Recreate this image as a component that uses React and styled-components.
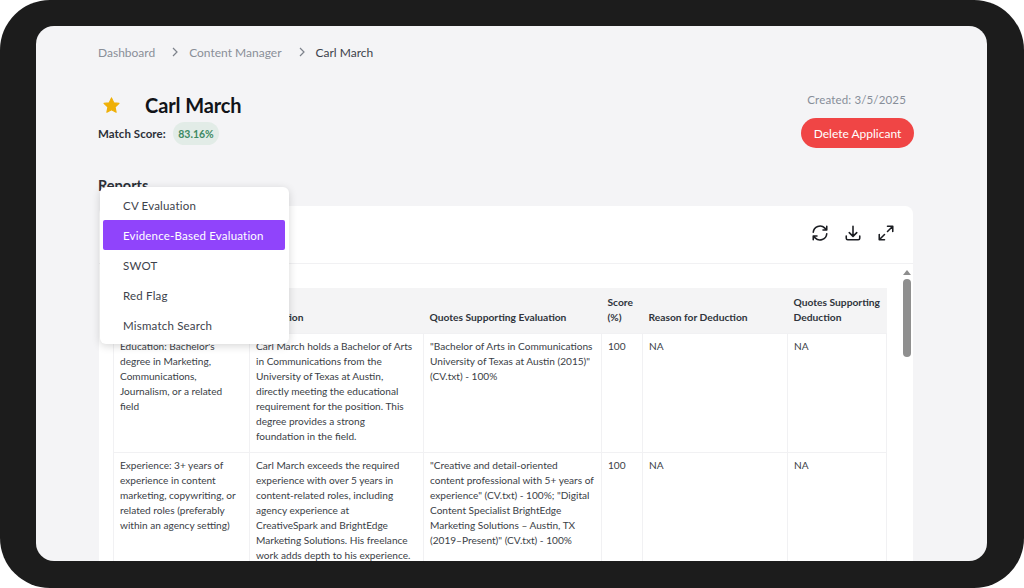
import React from "react";
import styled, { createGlobalStyle } from "styled-components";

const Global = createGlobalStyle`
  html, body { margin: 0; padding: 0; background: #fff; }
  body { font-family: "Lato", "Inter", "Liberation Sans", sans-serif; }
`;
const Frame = styled.div`
  width: 1024px; height: 588px; box-sizing: border-box; overflow: hidden;
  background: #1c1c1c; border-radius: 50px;
  padding: 26px 37px 27px 36px; display: flex;
`;
const Screen = styled.main`
  position: relative; flex: 1; min-width: 0; overflow: hidden;
  background: #f4f4f6; border-radius: 18px;
  padding: 18px 73px 0 62px;
  display: flex; flex-direction: column;
`;
const Crumbs = styled.nav`
  display: flex; align-items: center; height: 16px; font-size: 12px;
  color: #8a8f98;
`;
const Crumb = styled.span`
  color: ${p => (p.$current ? "#3d424b" : "#8a8f98")};
`;
const Chevron = styled.svg`
  width: 8px; height: 10px; margin: 0 10px 0 16px; fill: none; stroke: #7d828b; stroke-width: 1.2;
`;
const Head = styled.header`
  display: flex; justify-content: space-between; margin-top: 30px; height: 67px;
`;
const HeadLeft = styled.div`display: flex; flex-direction: column;`;
const TitleRow = styled.div`display: flex; align-items: center; height: 29px;`;
const Star = styled.svg`
  width: 19px; height: 18px; margin: 0 24px 0 4px; fill: #efb008; stroke: #efb008; stroke-width: 1.500; stroke-linejoin: round;
`;
const Title = styled.h1`margin: 0; font-size: 20px; font-weight: 700; color: #111318; letter-spacing: -.1px;`;
const ScoreRow = styled.div`display: flex; align-items: center; gap: 7px; margin-top: 3px;`;
const ScoreLabel = styled.span`font-size: 11.5px; font-weight: 700; color: #2c3038; letter-spacing: .05px;`;
const Badge = styled.span`
  display: flex; align-items: center; padding: 0 5.500px; height: 23px; border-radius: 12px;
  background: #e2ece7; color: #3d8a63; font-size: 10.5px; font-weight: 700;
`;
const HeadRight = styled.div`display: flex; flex-direction: column; align-items: flex-end;`;
const Created = styled.div`
  font-size: 11.5px; color: #878e99; margin: 2px 8px 0 0; line-height: 16px; letter-spacing: .15px;
`;
const Delete = styled.button`
  margin-top: 10px; width: 113px; height: 30px; border: 0; border-radius: 15px;
  background: #f04545; color: #fff; font: inherit; font-size: 12px;
`;
const Section = styled.h2`
  margin: 20px 0 0 0; font-size: 14.5px; font-weight: 700; color: #2c3038; line-height: 18px;
`;
const Card = styled.section`
  margin: 11px 1px 0 1px; flex: 1; min-height: 0; background: #fff; border-radius: 8px 8px 0 0;
  display: flex; flex-direction: column; overflow: hidden;
`;
const CardBar = styled.div`
  height: 58px; flex: none; box-sizing: border-box; border-bottom: 1px solid #f1f1f3;
  display: flex; align-items: center; justify-content: flex-end; gap: 15px; padding: 0 18px 3px 0;
`;
const IconButton = styled.svg`
  width: 18px; height: 18px; fill: none; stroke: #1b1d22; stroke-width: 2.100;
  stroke-linecap: round; stroke-linejoin: round;
`;
const ScrollArea = styled.div`
  flex: 1; min-height: 0; display: flex; padding: 0 0 0 14px;
`;
const TableWrap = styled.div`flex: 1; min-width: 0; padding-top: 24px;`;
const Table = styled.table`
  width: 773px; table-layout: fixed; border-collapse: collapse; font-size: 10.100px; line-height: 15px;
`;
const Th = styled.th`
  background: #f4f4f5; color: #30343c; font-weight: 700; font-size: 10.250px; text-align: left; vertical-align: bottom;
  padding: 7px 6px 8px; white-space: pre; width: ${p => p.$w}px; box-sizing: border-box;
`;
const Td = styled.td`
  border: 1px solid #f1f1f3; color: #3a3e46; padding: 5px 6px 8px; vertical-align: top;
  white-space: pre;
`;
const Track = styled.div`
  width: 12px; flex: none; display: flex; flex-direction: column; align-items: center; padding-top: 6px;
`;
const Arrow = styled.div`
  width: 0; height: 0; border-left: 4px solid transparent; border-right: 4px solid transparent;
  border-bottom: 5px solid #8d8d8d;
`;
const Thumb = styled.div`
  width: 8px; height: 78px; margin-top: 4px; border-radius: 4px; background: #8f8f8f;
`;
const Menu = styled.ul`
  position: absolute; left: 64px; top: 161px; width: 182px; margin: 0; padding: 3px 4px 4px 3px;
  list-style: none; background: #fff; border-radius: 6px;
  box-shadow: 0 2px 8px rgba(0,0,0,.16);
`;
const MenuItem = styled.li`
  height: 30px; display: flex; align-items: center; padding-left: 20px; border-radius: 2px;
  font-size: 11.5px; letter-spacing: .2px;
  color: ${p => (p.$active ? "#fff" : "#3d424b")};
  background: ${p => (p.$active ? "#9044fb" : "transparent")};
`;

const columns = [
  ["Criteria", 136], ["Evaluation", 174], ["Quotes Supporting Evaluation", 178],
  ["Score\n(%)", 41], ["Reason for Deduction", 145], ["Quotes Supporting\nDeduction", 99],
];
const rows = [
  [
    "Education: Bachelor's\ndegree in Marketing,\nCommunications,\nJournalism, or a related\nfield",
    "Carl March holds a Bachelor of Arts\nin Communications from the\nUniversity of Texas at Austin,\ndirectly meeting the educational\nrequirement for the position. This\ndegree provides a strong\nfoundation in the field.",
    "\"Bachelor of Arts in Communications\nUniversity of Texas at Austin (2015)\"\n(CV.txt) - 100%",
    "100", "NA", "NA",
  ],
  [
    "Experience: 3+ years of\nexperience in content\nmarketing, copywriting, or\nrelated roles (preferably\nwithin an agency setting)",
    "Carl March exceeds the required\nexperience with over 5 years in\ncontent-related roles, including\nagency experience at\nCreativeSpark and BrightEdge\nMarketing Solutions. His freelance\nwork adds depth to his experience.",
    "\"Creative and detail-oriented\ncontent professional with 5+ years of\nexperience\" (CV.txt) - 100%; \"Digital\nContent Specialist BrightEdge\nMarketing Solutions – Austin, TX\n(2019–Present)\" (CV.txt) - 100%",
    "100", "NA", "NA",
  ],
];
const menu = ["CV Evaluation", "Evidence-Based Evaluation", "SWOT", "Red Flag", "Mismatch Search"];

const Sep = () => <Chevron viewBox="0 0 8 10"><path d="M2 1l4 4-4 4" /></Chevron>;

export default function App() {
  return (
    <>
      <Global />
      <Frame>
        <Screen>
          <Crumbs>
            <Crumb>Dashboard</Crumb><Sep /><Crumb>Content Manager</Crumb><Sep /><Crumb $current>Carl March</Crumb>
          </Crumbs>
          <Head>
            <HeadLeft>
              <TitleRow>
                <Star viewBox="0 0 24 24"><path d="M12 2.500l3 6.500 7 .9-5.200 4.800 1.400 7L12 18.200l-6.200 3.500 1.400-7L2 9.900l7-.9z" /></Star>
                <Title>Carl March</Title>
              </TitleRow>
              <ScoreRow>
                <ScoreLabel>Match Score:</ScoreLabel>
                <Badge>83.16%</Badge>
              </ScoreRow>
            </HeadLeft>
            <HeadRight>
              <Created>Created: 3/5/2025</Created>
              <Delete>Delete Applicant</Delete>
            </HeadRight>
          </Head>
          <Section>Reports</Section>
          <Card>
            <CardBar>
              <IconButton viewBox="0 0 24 24">
                <path d="M3 11a9 9 0 0 1 15.500-5.500L21 8M21 3v5h-5" />
                <path d="M21 13a9 9 0 0 1-15.500 5.500L3 16M3 21v-5h5" />
              </IconButton>
              <IconButton viewBox="0 0 24 24">
                <path d="M12 3v13M7 11.500l5 5 5-5" />
                <path d="M3 16v3a2 2 0 0 0 2 2h14a2 2 0 0 0 2-2v-3" />
              </IconButton>
              <IconButton viewBox="0 0 24 24">
                <path d="M14 10l7-7M14 3h7v7" />
                <path d="M10 14l-7 7M3 14v7h7" />
              </IconButton>
            </CardBar>
            <ScrollArea>
              <TableWrap>
                <Table>
                  <thead>
                    <tr>{columns.map(([t, w]) => <Th key={t} $w={w}>{t}</Th>)}</tr>
                  </thead>
                  <tbody>
                    {rows.map((r, i) => (
                      <tr key={i}>{r.map((c, j) => <Td key={j}>{c}</Td>)}</tr>
                    ))}
                  </tbody>
                </Table>
              </TableWrap>
              <Track><Arrow /><Thumb /></Track>
            </ScrollArea>
          </Card>
          <Menu>
            {menu.map(m => <MenuItem key={m} $active={m === "Evidence-Based Evaluation"}>{m}</MenuItem>)}
          </Menu>
        </Screen>
      </Frame>
    </>
  );
}
